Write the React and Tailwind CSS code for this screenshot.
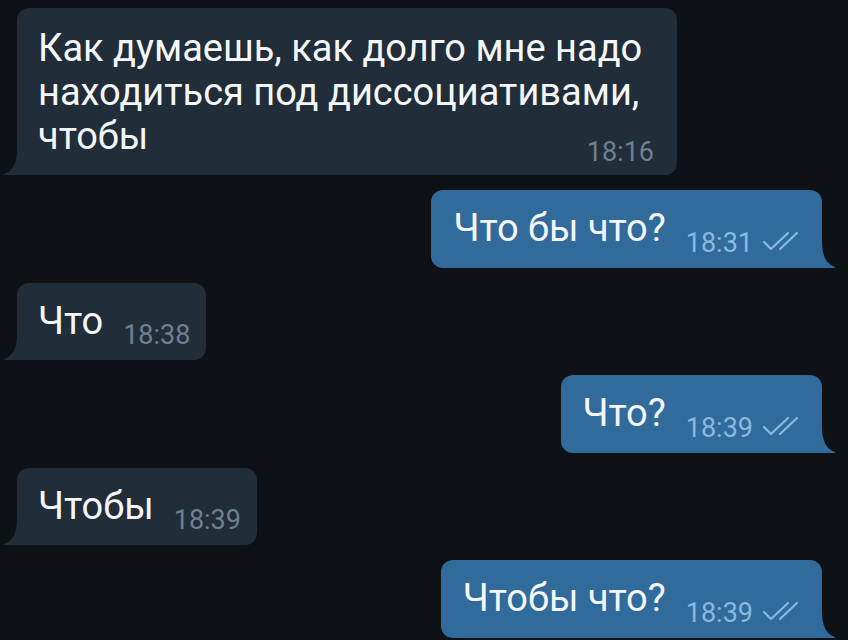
import React from 'react';

const messages = [
  {
    id: 1,
    out: false,
    lines: ['Как думаешь, как долго мне надо', 'находиться под диссоциативами,', 'чтобы'],
    time: '18:16',
  },
  { id: 2, out: true, text: 'Что бы что?', time: '18:31' },
  { id: 3, out: false, text: 'Что', time: '18:38' },
  { id: 4, out: true, text: 'Что?', time: '18:39' },
  { id: 5, out: false, text: 'Чтобы', time: '18:39' },
  { id: 6, out: true, text: 'Чтобы что?', time: '18:39' },
];

function Ticks() {
  return (
    <svg width="38" height="20" viewBox="0 0 38 20" fill="none" stroke="#8ab8df" strokeWidth="2.2" strokeLinecap="round" strokeLinejoin="round">
      <path d="M2 11 L9 18 L26 2" />
      <path d="M18 18 L35 2" />
    </svg>
  );
}

function TailIn() {
  return (
    <svg className="absolute bottom-0 -left-[14px]" width="15" height="26" viewBox="0 0 15 26">
      <path d="M15 0 L14 0 Q14 21 1 25 Q0 26 2 26 L15 26 Z" fill="#212d38" />
    </svg>
  );
}

function TailOut() {
  return (
    <svg className="absolute bottom-0 -right-[14px]" width="15" height="26" viewBox="0 0 15 26">
      <path d="M0 0 L1 0 Q1 21 14 25 Q15 26 13 26 L0 26 Z" fill="#306b9c" />
    </svg>
  );
}

function Bubble({ m }) {
  if (m.lines) {
    return (
      <div className="relative w-[660px] rounded-[12px] rounded-bl-none bg-[#212d38] pl-[21px] pr-[23px] pt-[18px] pb-[7px]">
        <TailIn />
        <div className="whitespace-nowrap text-[38px] leading-[44px] text-[#f4f6f8]">
          {m.lines.map((l, i) => (
            <div key={i}>{l}</div>
          ))}
        </div>
        <div className="-mt-[22px] text-right text-[27px] leading-[32px] text-[#6e8091]">{m.time}</div>
      </div>
    );
  }
  return (
    <div
      className={
        'relative flex items-end rounded-[12px] h-[77.5px] pt-[16px] ' +
        (m.out
          ? 'rounded-br-none bg-[#306b9c] pl-[22px] pr-[22px]'
          : 'rounded-bl-none bg-[#212d38] pl-[21px] pr-[16px]')
      }
    >
      {m.out ? <TailOut /> : <TailIn />}
      <span className="self-start whitespace-nowrap text-[38px] leading-[44px] text-[#f4f6f8]">{m.text}</span>
      <span className={'ml-[20px] mb-[12px] text-[27px] leading-[26px] ' + (m.out ? 'text-[#8ab8df]' : 'text-[#6e8091]')}>
        {m.time}
      </span>
      {m.out && (
        <span className="ml-[9px] mb-[17px]">
          <Ticks />
        </span>
      )}
    </div>
  );
}

export default function App() {
  return (
    <div
      className="w-[848px] h-[640px] overflow-hidden bg-[#0e1216] flex flex-col gap-[15px] pt-[8px]"
      style={{ fontFamily: 'Roboto, "Noto Sans", sans-serif' }}
    >
      {messages.map((m) => (
        <div key={m.id} className={m.out ? 'flex justify-end pr-[26px]' : 'flex justify-start pl-[17px]'}>
          <Bubble m={m} />
        </div>
      ))}
    </div>
  );
}
